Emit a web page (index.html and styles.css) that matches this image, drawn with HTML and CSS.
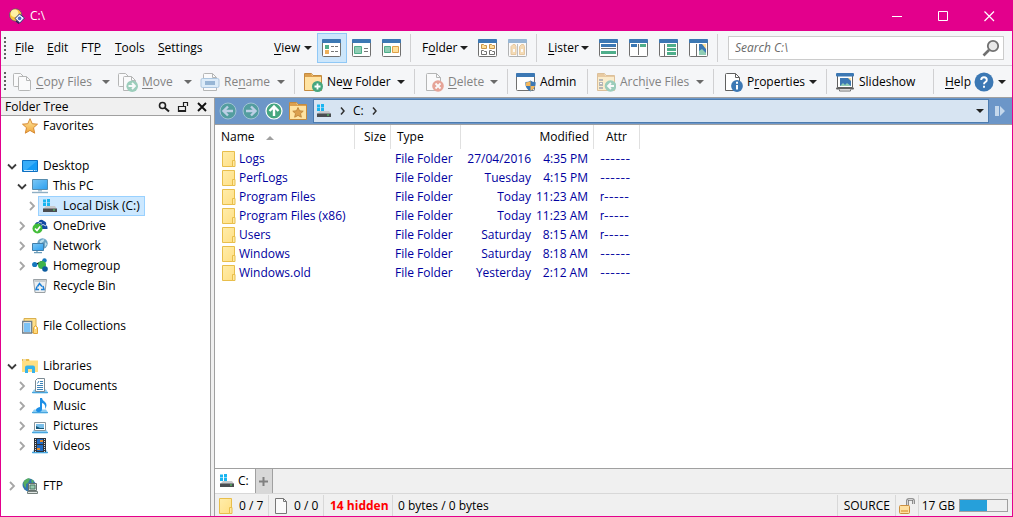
FILE: index.html
```
<!DOCTYPE html>
<html lang="en">
<head>
<meta charset="utf-8">
<title>C:\</title>
<meta name="viewport" content="width=device-width, initial-scale=1">
<link rel="stylesheet" href="styles.css">
</head>
<body>
<svg class="defs" aria-hidden="true">
  <defs>
    <linearGradient id="gold" x1="0" y1="0" x2="0" y2="1"><stop offset="0" stop-color="#ffe9a0"/><stop offset="1" stop-color="#f0a63c"/></linearGradient>
    <linearGradient id="sheet" x1="0" y1="0" x2="1" y2="1"><stop offset="0" stop-color="#ffedab"/><stop offset="1" stop-color="#ffdf84"/></linearGradient>
    <linearGradient id="screen" x1="0" y1="0" x2="1" y2="1"><stop offset="0" stop-color="#7cc8f5"/><stop offset="1" stop-color="#2b9ff0"/></linearGradient>
  </defs>
  <symbol id="i-app" viewBox="0 0 16 16"><circle cx="6.600" cy="7" r="6.200" fill="#f8c33c" stroke="#5b4a78" stroke-width=".8"/><circle cx="5.600" cy="5.200" r="3.800" fill="#fff0a4"/><path d="M6 10.500 10.500 6l5 4-4.700 5z" fill="#f4f6ff" stroke="#2e3a78"/><circle cx="10.600" cy="10.400" r="1.800" fill="#4d68c0"/><path d="m7 13 3 2.500" stroke="#1f2458" stroke-width="1.200"/></symbol>
  <symbol id="i-drop" viewBox="0 0 8 4"><path d="M0 0h8L4 4z" fill="currentColor"/></symbol>
  <symbol id="i-min" viewBox="0 0 11 11"><path d="M0 5.500h10" stroke="currentColor"/></symbol>
  <symbol id="i-max" viewBox="0 0 11 11"><path d="M.5.5h9v9h-9z" fill="none" stroke="currentColor"/></symbol>
  <symbol id="i-close" viewBox="0 0 11 11"><path d="m.5.5 9.500 9.500M10 .5.5 10" stroke="currentColor" stroke-width="1.200"/></symbol>

  <symbol id="i-frame" viewBox="0 0 20 20"><rect x=".5" y="1.500" width="18" height="17" rx="1" fill="#fff" stroke="#707070"/><path d="M0 5V2q0-1 1-1h17q1 0 1 1v3z" fill="#3c78b4"/></symbol>
  <symbol id="i-v-list" viewBox="0 0 20 20"><use href="#i-frame"/><path d="M3 7h4v4H3z" fill="#4fae8b"/><path d="M3 12h4v4H3z" fill="#edb15c"/><path d="M9 8.500h3m1 0h3M9 13.500h3m1 0h3" stroke="#777"/></symbol>
  <symbol id="i-v-tile" viewBox="0 0 20 20"><use href="#i-frame"/><path d="M2.500 8.500h7v7h-7z" fill="#8fcdb4" stroke="#4fae8b"/><path d="M12 10.500h4M12 13.500h4" stroke="#777"/></symbol>
  <symbol id="i-v-thumb" viewBox="0 0 20 20"><use href="#i-frame"/><path d="M2.500 8.500h6v6h-6z" fill="#8fcdb4" stroke="#4fae8b"/><path d="M10.500 8.500h6v6h-6z" fill="#ffdf99" stroke="#dda04a"/></symbol>
  <symbol id="i-f-grid" viewBox="0 0 20 20"><use href="#i-frame"/><path d="M3.500 6.500h2l1 1h2v3h-5zM11.500 6.500h2l1 1h2v3h-5z" fill="#ffdf99" stroke="#c9954b"/><path d="M3.500 12.500h2l1 1h2v3h-5zM11.500 12.500h2l1 1h2v3h-5z" fill="#fff" stroke="#707070"/></symbol>
  <symbol id="i-f-lock" viewBox="0 0 20 20"><use href="#i-frame"/><path d="M3 16.500V8.500l2-2h2l1 2v8zM11.500 16.500V8.500l2-2h2l1 2v8z" fill="#f4c176" stroke="#d99c4c"/><path d="M5 11h2v3H5zM13 11h2v3h-2z" fill="#fff"/><path d="M9.500 6v12" stroke="#888"/></symbol>
  <symbol id="i-l-rows" viewBox="0 0 20 20"><use href="#i-frame"/><path d="M2 6h15v3H2z" fill="#3c78b4"/><path d="M2 10.500h15" stroke="#707070"/><path d="M2 13h15v3H2z" fill="#4fae8b"/></symbol>
  <symbol id="i-l-cols" viewBox="0 0 20 20"><use href="#i-frame"/><path d="M2 6h6v3H2z" fill="#3c78b4"/><path d="M11 6h6v3h-6z" fill="#4fae8b"/><path d="M9.500 6v11" stroke="#707070"/></symbol>
  <symbol id="i-l-tree" viewBox="0 0 20 20"><use href="#i-frame"/><path d="M8 6h9v3H8zM8 10h9v3H8zM8 14h9v3H8z" fill="#4fae8b"/><path d="M5.500 6v12" stroke="#707070"/></symbol>
  <symbol id="i-l-view" viewBox="0 0 20 20"><use href="#i-frame"/><path d="M10 6h7v11h-7z" fill="#3c78b4"/><path d="M13 6h4v5z" fill="#ffe09a"/><path d="m10 13 3-2 4 4v2h-7z" fill="#8fcdb4"/><path d="M7.500 6v12" stroke="#707070"/></symbol>
  <symbol id="i-find" viewBox="0 0 18 18"><circle cx="11" cy="7" r="5.200" fill="#e8e8e8" stroke="#707070" stroke-width="1.800"/><path d="m7 11-5.500 5.500" stroke="#707070" stroke-width="2.600"/></symbol>

  <symbol id="i-copy" viewBox="0 0 20 20"><path d="M1.500 2.500q0-1 1-1h6l3 3v10H2.500q-1 0-1-1z" fill="#fff" stroke="#777"/><path d="M6.500 5.500q0-1 1-1h7l4 4v9q0 1-1 1h-10q-1 0-1-1z" fill="#fff" stroke="#777"/><path d="M14.500 4.500v4h4" fill="none" stroke="#777"/></symbol>
  <symbol id="i-move" viewBox="0 0 20 20"><path d="M.5 2.500q0-1 1-1h6l3 3v10h-9q-1 0-1-1z" fill="#fff" stroke="#777"/><path d="M5.500 5.500q0-1 1-1h7l4 4v10h-12z" fill="#fff" stroke="#777"/><path d="M13.500 4.500v4h4" fill="none" stroke="#777"/><circle cx="14.200" cy="14.200" r="5.800" fill="#46a67f"/><path d="M10.500 14h6M14 11l3 3-3 3" fill="none" stroke="#fff" stroke-width="1.800"/></symbol>
  <symbol id="i-rename" viewBox="0 0 20 20"><path d="M3.500 18.500v-16q0-1 1-1h8l4 4v13z" fill="#fff" stroke="#777"/><path d="M12.500 1.500v4h4" fill="none" stroke="#777"/><rect x="1" y="6.500" width="18" height="9" rx="1.500" fill="#c5e2f8" stroke="#6698c8"/><path d="M5 9h10v4H5z" fill="#3c78b4"/></symbol>
  <symbol id="i-folder" viewBox="0 0 20 20"><path d="M1.500 18.500v-17h7l1.500 2h8.500v15z" fill="#ffe3a2" stroke="#c48b3f"/><path d="M2 5V2h6l1.500 2H18v1z" fill="#dca04e"/></symbol>
  <symbol id="i-newfolder" viewBox="0 0 20 20"><use href="#i-folder"/><circle cx="14.500" cy="14.500" r="5.500" fill="#46a67f"/><path d="M11.500 14.500h6M14.500 11.500v6" stroke="#fff" stroke-width="1.800"/></symbol>
  <symbol id="i-delete" viewBox="0 0 20 20"><path d="M1.500 18.500v-16q0-1 1-1h9l4 4v13z" fill="#fff" stroke="#777"/><path d="M11.500 1.500v4h4" fill="none" stroke="#777"/><circle cx="13" cy="14" r="5.800" fill="#d8543a"/><path d="m10.500 11.500 5 5m0-5-5 5" stroke="#fff" stroke-width="1.800"/></symbol>
  <symbol id="i-admin" viewBox="0 0 20 20"><use href="#i-frame"/><path d="M14.500 8.500q2 1.500 5 1.500 1 6-5 9.500-6-3.500-5-9.500 3 0 5-1.500z" fill="#3c78b4"/><path d="M14.500 9v5H10q-.500-2 0-3.500 2.500-.3 4.500-1.500zM14.500 14H19q-1 3.500-4.500 5z" fill="#f4b75c"/></symbol>
  <symbol id="i-archive" viewBox="0 0 20 20"><use href="#i-folder"/><path d="M3 7h4v2H3zM3 10h4v4H3zM3 15h4v2H3z" fill="#777"/><path d="M4 11h2v1H4z" fill="#fff"/><circle cx="14.500" cy="14" r="5.800" fill="#46a67f"/><path d="M18 14h-6M15 11l-3 3 3 3" fill="none" stroke="#fff" stroke-width="1.800"/></symbol>
  <symbol id="i-props" viewBox="0 0 20 20"><path d="M1.500 18.500v-16q0-1 1-1h9l4 4v13z" fill="#fff" stroke="#606060"/><path d="M11.500 1.500v4h4" fill="none" stroke="#606060"/><circle cx="13" cy="14" r="5.900" fill="#3c78b4"/><path d="M13 9.800v2M13 13v4.500" stroke="#fff" stroke-width="2"/></symbol>
  <symbol id="i-slides" viewBox="0 0 20 20"><path d="M2.500 4v11.500h15V4" fill="#fff" stroke="#606060"/><rect x="1" y="1" width="18" height="3.500" rx="1" fill="#3c78b4"/><path d="M5 6h11v8H5z" fill="#3c78b4"/><path d="M13 6h3v3z" fill="#ffe09a"/><path d="m5 14 3-3 2 2 2-2 4 3z" fill="#8fcdb4"/><rect x="1" y="15.500" width="18" height="2" rx="1" fill="#606060"/><path d="M4.500 17.500v1.500h11v-1.500" fill="#fff" stroke="#707070"/></symbol>
  <symbol id="i-help" viewBox="0 0 20 20"><circle cx="10" cy="10" r="9.500" fill="#3c78b4"/><path d="M7.200 8q0-2.800 2.800-2.800T12.800 8q0 1.500-1.500 2.200-1.300.6-1.300 2M10 13.800v2" fill="none" stroke="#fff" stroke-width="1.900"/></symbol>

  <symbol id="i-back" viewBox="0 0 18 18"><circle cx="9" cy="9" r="8" fill="#3fa37e" stroke="#cce8de"/><path d="M14 9H5M9 4.500 4.500 9 9 13.500" fill="none" stroke="#fff" stroke-width="2.400"/></symbol>
  <symbol id="i-fwd" viewBox="0 0 18 18"><circle cx="9" cy="9" r="8" fill="#3fa37e" stroke="#cce8de"/><path d="M4 9h9M9 4.500 13.500 9 9 13.500" fill="none" stroke="#fff" stroke-width="2.400"/></symbol>
  <symbol id="i-up" viewBox="0 0 18 18"><circle cx="9" cy="9" r="8" fill="#46a67f" stroke="#fff" stroke-width="1.200"/><path d="M9 14V5M4.500 9 9 4.500 13.500 9" fill="none" stroke="#fff" stroke-width="2.400"/></symbol>
  <symbol id="i-favfolder" viewBox="0 0 20 20"><use href="#i-folder"/><path d="m10 6.500 1.500 3.300 3.700.4-2.700 2.400.8 3.600L10 14.400l-3.300 1.800.8-3.600-2.700-2.400 3.700-.4z" fill="#dca04e" stroke="#c48b3f"/></symbol>
  <symbol id="i-drive" viewBox="0 0 16 16"><path d="M1 1.500h3v3H1zM5 1h3v3.500H5zM1 5h3v3H1zM5 5h3v3H5z" fill="#19b5f1"/><path d="M4 8h9l2 3H1z" fill="#c7c9cc"/><path d="M1 10.500h14v3.500H1z" fill="#4a4d51"/><path d="M11 12h2" stroke="#5be26a"/></symbol>
  <symbol id="i-crumb" viewBox="0 0 5 8"><path d="m1 .5 3 3.500-3 3.500" fill="none" stroke="#303030" stroke-width="1.500"/></symbol>
  <symbol id="i-go" viewBox="0 0 12 12"><path d="M1 1h4v10H1zM6 1l5 5-5 5z" fill="#c5d8ec"/></symbol>

  <symbol id="i-open" viewBox="0 0 10 10"><path d="m1 3.500 4 4 4-4" fill="none" stroke="#3c3c3c" stroke-width="1.800"/></symbol>
  <symbol id="i-shut" viewBox="0 0 10 10"><path d="m3 1 4 4-4 4" fill="none" stroke="#a6a6a6" stroke-width="1.800"/></symbol>
  <symbol id="i-star" viewBox="0 0 16 16"><path d="m8 .7 2.200 5 5.300.5-4 3.500 1.200 5.500L8 12.400l-4.700 2.800 1.200-5.500-4-3.500 5.300-.5z" fill="url(#gold)" stroke="#d68a35"/></symbol>
  <symbol id="i-desktop" viewBox="0 0 16 16"><path d="M.5 2.500h15v11H.5z" fill="#159bf5" stroke="#0d6fc0"/><path d="M1 3h14L4 12H1z" fill="#38adf9"/><path d="M2 12.500h9m1 0h1m.6 0h1" stroke="#d5ecff"/></symbol>
  <symbol id="i-pc" viewBox="0 0 16 16"><path d="M.5 1.500h15v10H.5z" fill="url(#screen)" stroke="#568cae"/><path d="M6 12h4v1.500H6z" fill="#aac4d4"/><path d="M0 14.500h16" stroke="#8eafc4" stroke-width="1.400"/></symbol>
  <symbol id="i-onedrive" viewBox="0 0 16 16"><path d="M3 9Q2 4 6.500 4 8 0 12 3q3 1 2 4 2 1 1.500 4H4z" fill="#124aa2"/><path d="M5 7q2-4 5-2M8 8q3-3 6 0" fill="none" stroke="#fff" stroke-width=".8"/><circle cx="5.500" cy="10.500" r="5" fill="#43bd39"/><path d="m3 10.500 2 2 3.200-4" fill="none" stroke="#fff" stroke-width="1.600"/></symbol>
  <symbol id="i-network" viewBox="0 0 16 16"><circle cx="10.500" cy="5.500" r="5.200" fill="#6ba3c4"/><path d="M7.500 3.500q3.500-3 5-2l-1 2-3 2zM13 4l2 2-2 3z" fill="#b9ddec"/><path d="M.5 5.500h11v7H.5z" fill="url(#screen)" stroke="#427ea9"/><path d="M5 13v1M2 14.700h8" stroke="#6a9bb8" stroke-width="1.300"/></symbol>
  <symbol id="i-home" viewBox="0 0 16 16"><path d="m3 6 7 1 2-5m-2 5 3 5" stroke="#6f9ec0"/><circle cx="2.700" cy="6.500" r="2.600" fill="#1677bd"/><circle cx="12.500" cy="2.500" r="2.200" fill="#1677bd"/><circle cx="10" cy="7" r="4" fill="#3fb34b"/><circle cx="13" cy="11" r="2.800" fill="#0d5c9f"/></symbol>
  <symbol id="i-bin" viewBox="0 0 16 16"><path d="M1.500 1.500h13l-1.500 13H3z" fill="#eceff1" stroke="#9aa1a5"/><path d="M2 2h12l-.5 2h-11z" fill="#c8ced1"/><path d="m5.500 8.500 2-3 2.500 3m1-.5 1 3.500H9m-2 0H4l1-3" fill="none" stroke="#1c7fd6" stroke-width="1.500"/></symbol>
  <symbol id="i-coll" viewBox="0 0 16 16"><path d="M2 .5h12v14H2z" fill="#ffe08a" stroke="#d9b050"/><path d="M.7 3.500h9v11.500h-9z" fill="#fff" stroke="#6f7d88" stroke-width="1.300"/><path d="M2 5h6.500v9H2z" fill="#7cc2f4"/><path d="M11.500 15.500v-6l2-2 2 2v6z" fill="#ffd97a" stroke="#e1a63c"/><path d="M13 9h1v2h-1z" fill="#fff"/></symbol>
  <symbol id="i-libs" viewBox="0 0 16 16"><path d="M0 1h7l1 1.500h8V14H0z" fill="#ffdf82"/><path d="M0 1h7v2H0z" fill="#e8bb4d"/><path d="M1 2h3" stroke="#fff"/><path d="M3 15V9.500q0-2 2-2h6q2 0 2 2V15h-3v-4H6v4z" fill="#36b3ea"/></symbol>
  <symbol id="i-libbase" viewBox="0 0 16 16"><path d="m2 11.500-2 3q0 1 1 1h14q1 0 1-1l-2-3z" fill="#8ccdf2"/><path d="M0 14.500h16" stroke="#48a6df"/></symbol>
  <symbol id="i-docs" viewBox="0 0 16 16"><use href="#i-libbase"/><path d="M3.500 13.500V2.500l2-2h7v13z" fill="#fff" stroke="#7c8b94"/><path d="M8 3.500h3M8 5.500h3M5 7.500h6M5 9.500h6M5 11.500h6M5.500 5.500 7 3" stroke="#3c83b8"/></symbol>
  <symbol id="i-music" viewBox="0 0 16 16"><use href="#i-libbase"/><path d="M8 0h2q0 2 3 4 3 3 0 7 1-5-3-6v6q0 3-3 3t-3-2 4-3z" fill="#1d8fe6"/></symbol>
  <symbol id="i-pics" viewBox="0 0 16 16"><use href="#i-libbase"/><path d="M2.500 4.500h11v8h-11z" fill="#fff" stroke="#8b969c"/><path d="M4 6h8v5H4z" fill="#7bbfe9"/><path d="m4 8 4 2h4v1H4z" fill="#175777"/></symbol>
  <symbol id="i-videos" viewBox="0 0 16 16"><use href="#i-libbase"/><path d="M2 0h12v14H2z" fill="#30343a"/><path d="M5 1h6v5H5zM5 7h6v6H5z" fill="#236cc4"/><path d="M8 2h3v2H8zM5 10h3v2H5z" fill="#e58a2c"/><path d="M3.500 1v13M12.500 1v13" stroke="#d8dde2" stroke-dasharray="1 1"/></symbol>
  <symbol id="i-ftp" viewBox="0 0 16 16"><circle cx="7" cy="7" r="6.500" fill="#3274ad"/><path d="M2 3q4-4 6-2L6 5 4 6v4q-4-3-2-7zM9 1l3 2-2 3z" fill="#56ad61"/><path d="M6.500 5.500h8v7h-8z" fill="#d8dfdc" stroke="#65706d"/><path d="M8 7h5v4H8z" fill="#95c9ad" stroke="#4d7963"/><path d="M5.500 13.500h10v2h-10z" fill="#dfe4e2" stroke="#74807c"/></symbol>
  <symbol id="i-dir" viewBox="0 0 14 16"><path d="M.5.500h12v15H.5z" fill="url(#sheet)" stroke="#e8be4b"/><path d="M10.500 9.500h2.500v6h-2.500z" fill="#ffe9a2" stroke="#e8be4b"/></symbol>
  <symbol id="i-file" viewBox="0 0 14 16"><path d="M1.500.500h8l3 3v12h-11z" fill="#fafafa" stroke="#777"/><path d="M9.500.500v3h3" fill="none" stroke="#777"/></symbol>
  <symbol id="i-loupe" viewBox="0 0 12 12"><circle cx="4.500" cy="4.500" r="3" fill="none" stroke="#202020" stroke-width="1.600"/><path d="m6.500 6.500 4.500 4" stroke="#202020" stroke-width="2"/></symbol>
  <symbol id="i-unlock" viewBox="0 0 12 12"><path d="M1.500 5.500h7v5h-7zM6.500 5V1.500h4V5" fill="none" stroke="#202020" stroke-width="1.200"/><path d="M1 10h8" stroke="#202020" stroke-width="2"/></symbol>
  <symbol id="i-x" viewBox="0 0 12 12"><path d="m2 2 8 8m0-8-8 8" stroke="#101010" stroke-width="1.900"/></symbol>
  <symbol id="i-padlock" viewBox="0 0 16 16"><path d="M8.500 8V2.500q0-1 1-1h4q1 0 1 1V6" fill="none" stroke="#777" stroke-width="2.600"/><path d="M8.500 8V2.500q0-1 1-1h4q1 0 1 1V6" fill="none" stroke="#eee" stroke-width=".8"/><rect x=".5" y="7.500" width="10" height="8" rx="1" fill="#ffe0a0" stroke="#cc9040"/><path d="M2 12h7v2H2z" fill="#e8b45f"/></symbol>
</svg>

<div class="window">
  <header class="titlebar">
    <svg class="i16"><use href="#i-app"/></svg>
    <h1 class="title">C:\</h1>
    <button class="winbtn" aria-label="Minimize"><svg><use href="#i-min"/></svg></button>
    <button class="winbtn" aria-label="Maximize"><svg><use href="#i-max"/></svg></button>
    <button class="winbtn" aria-label="Close"><svg><use href="#i-close"/></svg></button>
  </header>

  <nav class="bar menubar" aria-label="Menu">
    <span class="grip"></span>
    <button class="menu"><span><u>F</u>ile</span></button>
    <button class="menu"><span><u>E</u>dit</span></button>
    <button class="menu"><span>FT<u>P</u></span></button>
    <button class="menu"><span><u>T</u>ools</span></button>
    <button class="menu"><span><u>S</u>ettings</span></button>
    <button class="menu"><span><u>V</u>iew</span><svg class="drop"><use href="#i-drop"/></svg></button>
    <button class="icon active" aria-label="Details view"><svg class="i20"><use href="#i-v-list"/></svg></button>
    <button class="icon" aria-label="Tiles view"><svg class="i20"><use href="#i-v-tile"/></svg></button>
    <button class="icon" aria-label="Thumbnails view"><svg class="i20"><use href="#i-v-thumb"/></svg></button>
    <span class="sep"></span>
    <button class="menu"><span>F<u>o</u>lder</span><svg class="drop"><use href="#i-drop"/></svg></button>
    <button class="icon" aria-label="Folder formats"><svg class="i20"><use href="#i-f-grid"/></svg></button>
    <button class="icon" aria-label="Lock format" disabled><svg class="i20"><use href="#i-f-lock"/></svg></button>
    <span class="sep"></span>
    <button class="menu"><span><u>L</u>ister</span><svg class="drop"><use href="#i-drop"/></svg></button>
    <button class="icon" aria-label="Dual horizontal"><svg class="i20"><use href="#i-l-rows"/></svg></button>
    <button class="icon" aria-label="Dual vertical"><svg class="i20"><use href="#i-l-cols"/></svg></button>
    <button class="icon" aria-label="Tree"><svg class="i20"><use href="#i-l-tree"/></svg></button>
    <button class="icon" aria-label="Viewer"><svg class="i20"><use href="#i-l-view"/></svg></button>
    <span class="sep"></span>
    <div class="search"><input type="text" placeholder="Search C:\" aria-label="Search"><svg class="i18"><use href="#i-find"/></svg></div>
  </nav>

  <nav class="bar toolbar" aria-label="Operations">
    <span class="grip"></span>
    <button class="tool" disabled><svg class="i20"><use href="#i-copy"/></svg><span><u>C</u>opy Files</span><svg class="drop"><use href="#i-drop"/></svg></button>
    <button class="tool" disabled><svg class="i20"><use href="#i-move"/></svg><span><u>M</u>ove</span><svg class="drop"><use href="#i-drop"/></svg></button>
    <button class="tool" disabled><svg class="i20"><use href="#i-rename"/></svg><span>Re<u>n</u>ame</span><svg class="drop"><use href="#i-drop"/></svg></button>
    <span class="sep"></span>
    <button class="tool"><svg class="i20"><use href="#i-newfolder"/></svg><span>Ne<u>w</u> Folder</span><svg class="drop"><use href="#i-drop"/></svg></button>
    <span class="sep"></span>
    <button class="tool page" disabled><svg class="i20"><use href="#i-delete"/></svg><span><u>D</u>elete</span><svg class="drop"><use href="#i-drop"/></svg></button>
    <span class="sep"></span>
    <button class="tool"><svg class="i20"><use href="#i-admin"/></svg><span>Admin</span></button>
    <span class="sep"></span>
    <button class="tool" disabled><svg class="i20"><use href="#i-archive"/></svg><span>Arch<u>i</u>ve Files</span><svg class="drop"><use href="#i-drop"/></svg></button>
    <span class="sep"></span>
    <button class="tool page"><svg class="i20"><use href="#i-props"/></svg><span>P<u>r</u>operties</span><svg class="drop"><use href="#i-drop"/></svg></button>
    <span class="sep"></span>
    <button class="tool"><svg class="i20"><use href="#i-slides"/></svg><span>Slideshow</span></button>
    <span class="sep"></span>
    <button class="tool help"><span><u>H</u>elp</span><svg class="i20"><use href="#i-help"/></svg><svg class="drop"><use href="#i-drop"/></svg></button>
  </nav>

  <div class="body">
    <aside class="side">
      <div class="sidehead">
        <h2>Folder Tree</h2>
        <button aria-label="Find"><svg><use href="#i-loupe"/></svg></button>
        <button aria-label="Lock"><svg><use href="#i-unlock"/></svg></button>
        <button aria-label="Close tree"><svg><use href="#i-x"/></svg></button>
      </div>
      <ul class="tree">
        <li><div class="node"><span class="tog"></span><a href="#"><svg class="i16"><use href="#i-star"/></svg>Favorites</a></div></li>
        <li class="spaced"><div class="node"><svg class="tog"><use href="#i-open"/></svg><a href="#"><svg class="i16"><use href="#i-desktop"/></svg>Desktop</a></div>
          <ul>
            <li><div class="node"><svg class="tog"><use href="#i-open"/></svg><a href="#"><svg class="i16"><use href="#i-pc"/></svg>This PC</a></div>
              <ul>
                <li><div class="node"><svg class="tog"><use href="#i-shut"/></svg><a href="#" class="picked"><svg class="i16"><use href="#i-drive"/></svg>Local Disk (C:)</a></div></li>
              </ul>
            </li>
            <li><div class="node"><svg class="tog"><use href="#i-shut"/></svg><a href="#"><svg class="i16"><use href="#i-onedrive"/></svg>OneDrive</a></div></li>
            <li><div class="node"><svg class="tog"><use href="#i-shut"/></svg><a href="#"><svg class="i16"><use href="#i-network"/></svg>Network</a></div></li>
            <li><div class="node"><svg class="tog"><use href="#i-shut"/></svg><a href="#"><svg class="i16"><use href="#i-home"/></svg>Homegroup</a></div></li>
            <li><div class="node"><span class="tog"></span><a href="#"><svg class="i16"><use href="#i-bin"/></svg>Recycle Bin</a></div></li>
          </ul>
        </li>
        <li class="spaced"><div class="node"><span class="tog"></span><a href="#"><svg class="i16"><use href="#i-coll"/></svg>File Collections</a></div></li>
        <li class="spaced"><div class="node"><svg class="tog"><use href="#i-open"/></svg><a href="#"><svg class="i16"><use href="#i-libs"/></svg>Libraries</a></div>
          <ul>
            <li><div class="node"><svg class="tog"><use href="#i-shut"/></svg><a href="#"><svg class="i16"><use href="#i-docs"/></svg>Documents</a></div></li>
            <li><div class="node"><svg class="tog"><use href="#i-shut"/></svg><a href="#"><svg class="i16"><use href="#i-music"/></svg>Music</a></div></li>
            <li><div class="node"><svg class="tog"><use href="#i-shut"/></svg><a href="#"><svg class="i16"><use href="#i-pics"/></svg>Pictures</a></div></li>
            <li><div class="node"><svg class="tog"><use href="#i-shut"/></svg><a href="#"><svg class="i16"><use href="#i-videos"/></svg>Videos</a></div></li>
          </ul>
        </li>
        <li class="spaced"><div class="node"><svg class="tog"><use href="#i-shut"/></svg><a href="#"><svg class="i16"><use href="#i-ftp"/></svg>FTP</a></div></li>
      </ul>
    </aside>

    <main class="lister">
      <div class="pathbar">
        <button aria-label="Back" disabled><svg class="i18"><use href="#i-back"/></svg></button>
        <button aria-label="Forward" disabled><svg class="i18"><use href="#i-fwd"/></svg></button>
        <button aria-label="Up"><svg class="i18"><use href="#i-up"/></svg></button>
        <button aria-label="Favorites"><svg class="i20"><use href="#i-favfolder"/></svg></button>
        <div class="path">
          <svg class="i16"><use href="#i-drive"/></svg>
          <svg class="crumb"><use href="#i-crumb"/></svg>
          <a href="#">C:</a>
          <svg class="crumb"><use href="#i-crumb"/></svg>
          <button class="pathdrop" aria-label="Path history"><svg class="drop"><use href="#i-drop"/></svg></button>
        </div>
        <button class="go" aria-label="Go"><svg><use href="#i-go"/></svg></button>
      </div>

      <div class="files">
        <table>
          <colgroup><col class="c-name"><col class="c-size"><col class="c-type"><col class="c-date"><col class="c-time"><col class="c-attr"></colgroup>
          <thead><tr><th>Name <svg class="sort"><use href="#i-drop"/></svg></th><th class="end">Size</th><th>Type</th><th class="end" colspan="2">Modified</th><th class="mid">Attr</th></tr></thead>
          <tbody>
            <tr><td><a href="#"><svg class="dir"><use href="#i-dir"/></svg>Logs</a></td><td></td><td>File Folder</td><td class="end">27/04/2016</td><td class="end">4:35 PM</td><td class="attr">------</td></tr>
            <tr><td><a href="#"><svg class="dir"><use href="#i-dir"/></svg>PerfLogs</a></td><td></td><td>File Folder</td><td class="end">Tuesday</td><td class="end">4:15 PM</td><td class="attr">------</td></tr>
            <tr><td><a href="#"><svg class="dir"><use href="#i-dir"/></svg>Program Files</a></td><td></td><td>File Folder</td><td class="end">Today</td><td class="end">11:23 AM</td><td class="attr">r-----</td></tr>
            <tr><td><a href="#"><svg class="dir"><use href="#i-dir"/></svg>Program Files (x86)</a></td><td></td><td>File Folder</td><td class="end">Today</td><td class="end">11:23 AM</td><td class="attr">r-----</td></tr>
            <tr><td><a href="#"><svg class="dir"><use href="#i-dir"/></svg>Users</a></td><td></td><td>File Folder</td><td class="end">Saturday</td><td class="end">8:15 AM</td><td class="attr">r-----</td></tr>
            <tr><td><a href="#"><svg class="dir"><use href="#i-dir"/></svg>Windows</a></td><td></td><td>File Folder</td><td class="end">Saturday</td><td class="end">8:18 AM</td><td class="attr">------</td></tr>
            <tr><td><a href="#"><svg class="dir"><use href="#i-dir"/></svg>Windows.old</a></td><td></td><td>File Folder</td><td class="end">Yesterday</td><td class="end">2:12 AM</td><td class="attr">------</td></tr>
          </tbody>
        </table>
      </div>

      <div class="tabs">
        <button class="tab"><svg class="i16"><use href="#i-drive"/></svg>C:</button>
        <button class="addtab" aria-label="New tab"><svg viewBox="0 0 9 9"><path d="M0 4.500h9M4.500 0v9" stroke="#808080" stroke-width="2"/></svg></button>
      </div>

      <footer class="status">
        <span class="cell dirs"><svg class="dir"><use href="#i-dir"/></svg>0 / 7</span>
        <span class="cell docs"><svg class="dir"><use href="#i-file"/></svg>0 / 0</span>
        <span class="cell hidden">14 hidden</span>
        <span class="cell bytes">0 bytes / 0 bytes</span>
        <span class="cell source">SOURCE</span>
        <span class="cell lock"><svg class="i16"><use href="#i-padlock"/></svg></span>
        <span class="cell disk"><span>17 GB</span><span class="meter"><span class="fill" style="width:58%"></span></span></span>
      </footer>
    </main>
  </div>
</div>
</body>
</html>
```
FILE: styles.css
```
* { box-sizing: border-box; }

body {
  margin: 0;
  font: 12px/16px "Open Sans", "Noto Sans", sans-serif;
  color: #000;
}

button, input {
  margin: 0;
  padding: 0;
  border: 0;
  background: none;
  font: inherit;
  color: inherit;
}

a { color: inherit; text-decoration: none; }
u { text-underline-offset: 2px; }
h1, h2 { margin: 0; font: inherit; }
svg { display: block; flex: none; }

.defs { position: absolute; width: 0; height: 0; }
.i16 { width: 16px; height: 16px; }
.i18 { width: 18px; height: 18px; }
.i20 { width: 20px; height: 20px; }
.drop { width: 8px; height: 4px; color: #202020; }

.window {
  display: flex;
  flex-direction: column;
  min-height: 100vh;
  border: 1px solid #e3008c;
  background: #f0f0f0;
}

/* Title bar */
.titlebar {
  display: flex;
  align-items: center;
  height: 30px;
  padding-left: 8px;
  background: #e3008c;
  color: #fff;
}
.title { flex: 1; padding-left: 5px; }
.winbtn {
  display: grid;
  place-items: center;
  width: 46px;
  height: 30px;
}
.winbtn svg { width: 11px; height: 11px; }

/* Menu and tool bars */
.bar {
  display: grid;
  align-items: stretch;
  background: #f5f6f8;
}
.menubar {
  height: 35px;
  border-bottom: 1px solid #d4d4d6;
  grid-template-columns: 9px 32px 34px 34px 43px 116px 48px 30px 30px 30px 10px 56px 30px 30px 10px 51px 30px 30px 30px 30px 10px 1fr;
}
.toolbar {
  height: 32px;
  border-bottom: 1px solid #a0a0a0;
  grid-template-columns: 9px 106px 82px 93px 10px 110px 10px 83px 10px 70px 10px 116px 10px 103px 10px 97px 10px 1fr;
}
.grip {
  width: 2px;
  margin: 6px 0 6px 3px;
  background: repeating-linear-gradient(#606060 0 2px, transparent 2px 4px);
}
.sep {
  width: 1px;
  margin: 3px 0 3px 3px;
  background: #d0d0d2;
}
.menu {
  display: flex;
  align-items: center;
  justify-content: space-between;
  padding: 0 5px;
  white-space: nowrap;
}
.icon {
  display: grid;
  place-items: center;
  align-self: center;
  height: 30px;
  border: 1px solid transparent;
}
.icon.active { background: #cce6fb; border-color: #90c8f6; }
.tool {
  display: flex;
  align-items: center;
  gap: 4px;
  padding: 0 6px 0 2px;
  white-space: nowrap;
}
.tool .drop { margin-left: auto; }
.tool.page { gap: 3px; padding-left: 4px; }
.tool.help { gap: 3px; padding: 0 6px 0 5px; }
.tool:disabled { color: #838383; }
.tool:disabled .i20, .icon:disabled .i20 { opacity: .5; }
.tool:disabled .drop { color: #6a6a6a; }

.search {
  display: flex;
  align-items: center;
  height: 24px;
  margin: 5px 8px 0 4px;
  padding: 0 3px 0 6px;
  border: 1px solid #cccccc;
  background: #fff;
}
.search input { flex: 1; min-width: 0; outline: 0; }
.search input::placeholder { color: #6a6a6a; font-style: italic; opacity: 1; }

/* Folder tree */
.body { display: flex; flex: 1; }
.side {
  display: flex;
  flex-direction: column;
  width: 210px;
  flex: none;
}
.sidehead {
  display: flex;
  align-items: center;
  gap: 7px;
  height: 17px;
  padding: 0 3px 0 4px;
}
.sidehead h2 { flex: 1; }
.sidehead svg { width: 12px; height: 12px; }
.tree {
  flex: 1;
  border-top: 1px solid #a0a0a0;
  border-right: 1px solid #a0a0a0;
  background: #fff;
}
.tree, .tree ul { margin: 0; padding: 0; list-style: none; }
.tree { padding-left: 6px; }
.tree ul { padding-left: 10px; }
.spaced { margin-top: 20px; }
.node { display: flex; align-items: center; height: 20px; }
.tog { width: 10px; height: 10px; margin-right: 1px; }
.node a {
  display: flex;
  align-items: center;
  gap: 5px;
  height: 20px;
  padding: 0 4px 0 3px;
  border: 1px solid transparent;
}
.node a.picked { background: #cce8ff; border-color: #99d1ff; }

/* Lister */
.lister {
  display: flex;
  flex-direction: column;
  flex: 1;
  min-width: 0;
  margin-left: 3px;
  border-left: 1px solid #a0a0a0;
}
.pathbar {
  display: flex;
  align-items: center;
  gap: 5px;
  height: 27px;
  padding-left: 4px;
  border-bottom: 1px solid #a0a0a0;
  background: #6c96c8;
}
.pathbar button:disabled { opacity: .55; }
.path {
  display: flex;
  align-items: center;
  flex: 1;
  gap: 8px;
  height: 24px;
  padding-left: 2px;
  border: 1px solid #4c7cb0;
  background: #d7e4f2;
}
.crumb { width: 5px; height: 8px; }
.pathdrop { display: flex; margin-left: auto; padding: 4px; }
.go { padding-right: 6px; }
.go svg { width: 12px; height: 12px; }

.files { flex: 1; background: #fff; }
table { width: 425px; border-collapse: separate; border-spacing: 0; table-layout: fixed; }
.c-name { width: 140px; }
.c-size { width: 36px; }
.c-type { width: 70px; }
.c-date { width: 75px; }
.c-time { width: 58px; }
.c-attr { width: 46px; }
th {
  height: 24px;
  padding: 0 6px;
  border-right: 1px solid #e0e0e0;
  font-weight: normal;
  text-align: left;
}
th.end { padding: 0 4px; }
td {
  height: 19px;
  padding: 0 4px;
  color: #0000a0;
  white-space: nowrap;
}
td a { display: flex; align-items: center; gap: 3px; padding-left: 3px; }
.end { text-align: right; }
td.end { padding: 0 5px 0 0; }
td.end + td.end { padding-right: 6px; }
.mid { text-align: center; }
td.attr { padding-left: 6px; font: 11px/16px Inter, sans-serif; }
.dir { width: 14px; height: 16px; }
.sort {
  display: inline-block;
  width: 8px;
  height: 4px;
  margin-left: 8px;
  vertical-align: middle;
  color: #a0a0a0;
  transform: rotate(180deg);
}

.tabs {
  display: flex;
  height: 25px;
  border-top: 1px solid #a0a0a0;
}
.tab {
  display: flex;
  align-items: center;
  gap: 3px;
  padding: 0 6px 0 4px;
  border-right: 1px solid #a0a0a0;
  background: #fff;
}
.addtab {
  display: grid;
  place-items: center;
  width: 17px;
  border-right: 1px solid #a0a0a0;
  background: #d8d8d8;
}
.addtab svg { width: 9px; height: 9px; }

.status {
  display: flex;
  height: 23px;
  padding: 1px 4px 0 0;
  border-top: 1px solid #d8d8d8;
}
.cell {
  display: flex;
  align-items: center;
  gap: 6px;
  padding: 0 5px;
  border-right: 1px solid #d8d8d8;
  white-space: nowrap;
}
.dirs { width: 54px; padding-left: 4px; }
.docs { width: 55px; }
.hidden { width: 69px; padding: 0 6px; color: #f00; font-weight: bold; }
.bytes { flex: 1; }
.source { width: 58px; padding: 0 6px; }
.lock { width: 23px; padding: 0 3px; }
.disk { padding: 0 0 0 3px; border-right: 0; gap: 4px; }
.meter { width: 49px; height: 13px; border: 1px solid #a0a0a0; background: #f0f0f0; }
.fill { display: block; height: 100%; background: #26a0da; }
```
